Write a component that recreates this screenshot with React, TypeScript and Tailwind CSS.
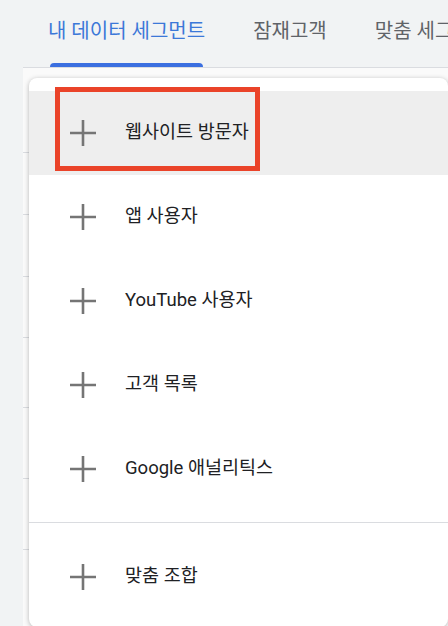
import { Fragment } from "react";

const items = ["웹사이트 방문자", "앱 사용자", "YouTube 사용자", "고객 목록", "Google 애널리틱스"];

const tabs = [
  { label: "내 데이터 세그먼트", active: true },
  { label: "잠재고객", active: false },
  { label: "맞춤 세그먼트", active: false },
];

// heights of the rows of the table lying under the menu
const bgRows = [85, 62, 62, 61, 70, 71, 71];

const PlusIcon = () => (
  <svg width="26" height="26" viewBox="0 0 26 26" className="shrink-0">
    <path d="M13 0v26M0 13h26" stroke="#757575" strokeWidth="2.6" fill="none" />
  </svg>
);

const MenuRow = ({ label, active }: { label: string; active?: boolean }) => (
  <div className={`flex h-[84px] items-center pl-[41px] ${active ? "bg-[#eeeeee]" : ""}`}>
    <PlusIcon />
    <span className="ml-[29px] text-[18.5px] font-normal text-[#202124]">{label}</span>
  </div>
);

export default function App() {
  return (
    <div className="relative h-[626px] w-[448px] overflow-hidden bg-[#f1f3f4] font-[family-name:Roboto,'Noto_Sans_CJK_KR',sans-serif]">
      <div className="flex h-[67px] items-end whitespace-nowrap pl-6">
        {tabs.map((tab) => (
          <div key={tab.label} className="flex shrink-0 flex-col px-6">
            <span className={`text-[20px] leading-[24px] ${tab.active ? "text-[#3c78d8]" : "text-[#5f6368]"}`}>
              {tab.label}
            </span>
            <div className={`mt-[20px] h-1 mx-0.5 rounded-t ${tab.active ? "bg-[#3b6fe0]" : "bg-transparent"}`} />
          </div>
        ))}
      </div>

      <div className="ml-[23px] h-full border-t border-[#dadce0] bg-[#fafafa]">
        {bgRows.map((h, i) => (
          <div key={i} style={{ height: h }} className="border-b border-[#dadce0]" />
        ))}
      </div>

      <div className="absolute left-[29px] right-0 top-[78px] h-[549px] rounded-lg bg-white shadow-[0_1px_5px_rgba(0,0,0,0.28)]">
        <div className="pt-[13px] pb-[11px]">
          {items.map((label, i) => (
            <Fragment key={label}>
              <MenuRow label={label} active={i === 0} />
            </Fragment>
          ))}
        </div>
        <div className="border-t border-[#dadce0] pt-3">
          <MenuRow label="맞춤 조합" />
        </div>

        <div className="absolute left-[26px] top-[9px] h-[84px] w-[205px] border-[5px] border-[#ea4329]" />
      </div>
    </div>
  );
}
